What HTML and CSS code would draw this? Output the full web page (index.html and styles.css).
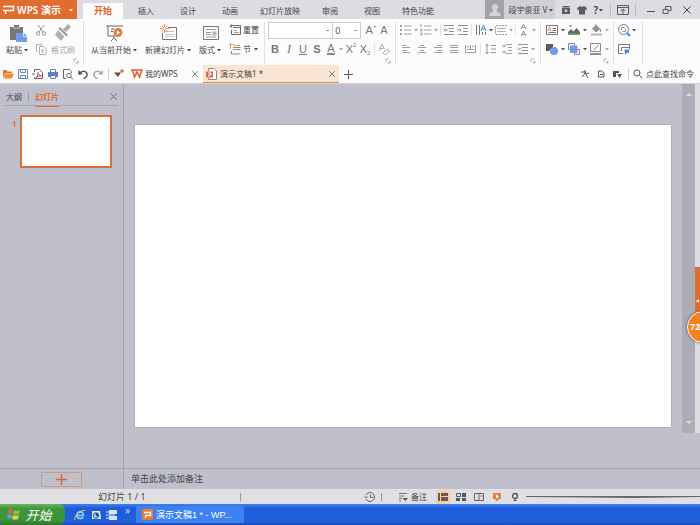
FILE: index.html
```html
<!DOCTYPE html>
<html lang="zh-CN">
<head>
  <meta charset="UTF-8" />
  <meta name="viewport" content="width=device-width, initial-scale=1" />
  <title>WPS 演示</title>
  <link rel="stylesheet" href="styles.css">
</head>
<body>

  <!-- Shared icons -->
  <svg class="icon-defs" aria-hidden="true">
    <symbol id="caret" viewBox="0 0 6 6"><path d="M1 2h4L3 4.500z" fill="currentColor"/></symbol>
    <symbol id="close" viewBox="0 0 10 10"><path d="M1.500 1.500l7 7M8.500 1.500l-7 7" stroke="currentColor" fill="none"/></symbol>
    <symbol id="corner" viewBox="0 0 6 6"><path d="M1 4V1h3M3 5h2V3z" stroke="currentColor" stroke-width=".7" fill="none"/></symbol>
    <symbol id="lines" viewBox="0 0 14 14"><path d="M2 2.500h10M2 5.500h10M2 8.500h10M2 11.500h10" stroke="currentColor" fill="none"/></symbol>
  </svg>

  <header class="titlebar">
    <button class="app-button">
      <svg width="12" height="10" viewBox="0 0 12 10"><path d="M0 1.500h10.500v4H2.500V9M0 5.500h4" fill="none" stroke="#fff" stroke-width="1.500"/></svg>
      <span>WPS 演示</span>
      <svg class="caret"><use href="#caret"/></svg>
    </button>
    <nav class="tabs">
      <a class="tab active" href="#">开始</a>
      <a class="tab" href="#">插入</a>
      <a class="tab" href="#">设计</a>
      <a class="tab" href="#">动画</a>
      <a class="tab long" href="#">幻灯片放映</a>
      <a class="tab" href="#">审阅</a>
      <a class="tab" href="#">视图</a>
      <a class="tab long" href="#">特色功能</a>
    </nav>
    <div class="account">
      <span class="avatar"><svg width="14" height="14" viewBox="0 0 14 14"><path d="M7 1a3 3 0 0 1 3 3c0 1.500-.8 2.500-1.200 3v1.500c1 .8 3.200 1 3.700 2.500v2h-11v-2c.5-1.500 2.700-1.700 3.700-2.500V7C4.800 6.500 4 5.500 4 4a3 3 0 0 1 3-3z" fill="#d4d4d6"/></svg></span>
      <button class="user">段宇俊亚 V <svg class="caret"><use href="#caret"/></svg></button>
    </div>
    <div class="window-tools">
      <button aria-label="云文档"><svg width="10" height="10" viewBox="0 0 10 10"><path d="M1.500 1h7v1.500h-7zM1 3h8v6H1z" fill="#5c5c5e"/><path d="M3.500 5.500L5 7l1.500-1.500M5 4v3" stroke="#eee" fill="none"/></svg></button>
      <button aria-label="皮肤"><svg width="10" height="10" viewBox="0 0 10 10"><path d="M3 1l2 1 2-1 3 2-1 2.500-1-.5v4.500H2V5l-1 .5L0 3z" fill="#5c5c5e"/></svg></button>
      <button class="help" aria-label="帮助">?<svg class="caret"><use href="#caret"/></svg></button>
      <span class="divider"></span>
      <button aria-label="功能区"><svg width="12" height="10" viewBox="0 0 12 10"><path d="M.500 .500h11v9H.500zM.500 2.500h11M6 9V4M3.800 6L6 4l2.200 2" fill="none" stroke="#5c5c5e"/></svg></button>
      <span class="divider"></span>
      <button class="minimize" aria-label="最小化"><svg width="10" height="10" viewBox="0 0 10 10"><path d="M1 6.500h8" stroke="#555" fill="none"/></svg></button>
      <button aria-label="还原"><svg width="10" height="10" viewBox="0 0 10 10"><path d="M1 4.500h5v4H1zM3.500 4V1.500H9v4H6.500" fill="none" stroke="#555"/></svg></button>
      <button class="close-window" aria-label="关闭"><svg width="10" height="10"><use href="#close"/></svg></button>
    </div>
  </header>

  <section class="ribbon">
    <div class="group clipboard">
      <button class="big">
        <svg width="20" height="20" viewBox="0 0 20 20"><path d="M2 4h4V2h5v2h4v13H2z" fill="#77777b"/><path d="M5 5h7" stroke="#c9c9cc" fill="none"/><path d="M8 10h8l3 3v6H8z" fill="#6f9de8"/><path d="M15.500 10v3.500H19" stroke="#fff" stroke-width=".7" fill="none"/></svg>
        <span>粘贴 <svg class="caret"><use href="#caret"/></svg></span>
      </button>
      <div class="stack">
        <button class="tool" aria-label="剪切"><svg viewBox="0 0 14 14"><path d="M4 2l5 7M10 2L5 9" stroke="#929296" fill="none"/><circle cx="4" cy="10.500" r="1.700" stroke="#929296" fill="none"/><circle cx="10" cy="10.500" r="1.700" stroke="#929296" fill="none"/></svg></button>
        <button class="tool" aria-label="复制"><svg viewBox="0 0 14 14"><path d="M4 9.500H2.500v-7h5V4M5.500 4.500H10L12 6.500v6H5.500zM7 8h3M7 10h3" stroke="#b0b0b3" fill="none"/></svg></button>
      </div>
      <button class="big muted">
        <svg width="20" height="20" viewBox="0 0 20 20"><path d="M15 1l3 3-5 5-3-2.500z" fill="#aaaaad"/><path d="M7 4l8 8-1.500 1.500-8-8z" fill="#99999c"/><path d="M5 7l6.500 6.500L8 18l-6-6z" fill="#b0b0b3"/></svg>
        <span>格式刷</span>
      </button>
      <svg class="corner"><use href="#corner"/></svg>
    </div>

    <div class="group slides">
      <button class="big">
        <svg width="20" height="20" viewBox="0 0 20 20"><path d="M1 3h17M3 3v10h7M9 13v3M6 18l3-3 3 3M6 6h3M6 8.500h2" stroke="#66666a" fill="none"/><circle cx="13" cy="9.500" r="4.500" fill="#e37d46"/><path d="M11.800 7.200l3.200 2.300-3.200 2.300z" fill="#fff"/></svg>
        <span>从当前开始 <svg class="caret"><use href="#caret"/></svg></span>
      </button>
      <button class="big">
        <svg width="20" height="20" viewBox="0 0 20 20"><path d="M9 4.500h8.500v12h-14V10" stroke="#77777b" fill="none"/><path d="M6 8.500h9M6 11.500h9M6 13.500h9" stroke="#c3c3c6" fill="none"/><path d="M5.500 1v9M1 5.500h9M2.500 2.500l6 6M8.500 2.500l-6 6" stroke="#ec8b4c" fill="none"/><circle cx="5.500" cy="5.500" r="1.200" fill="#fff"/></svg>
        <span>新建幻灯片 <svg class="caret"><use href="#caret"/></svg></span>
      </button>
      <button class="big">
        <svg width="20" height="20" viewBox="0 0 20 20"><path d="M2.500 3.500h15v13h-15z" stroke="#77777b" fill="none"/><path d="M5 6.500h10M5 9.500h5M5 11.500h5M5 14h10" stroke="#99999c" fill="none"/><path d="M11.500 8.500h4v4h-4z" fill="#b5b5b8"/></svg>
        <span>版式 <svg class="caret"><use href="#caret"/></svg></span>
      </button>
      <div class="stack">
        <button class="label-tool"><svg width="12" height="12" viewBox="0 0 12 12"><path d="M3 1.500h8.500v9h-9V6M4 3.500h7" stroke="#66666a" fill="none"/><path d="M5 6.500h3M5 8.500h5" stroke="#ec8b4c" fill="none"/><path d="M0 2l3-2v4z" fill="#4d82d8"/></svg>重置</button>
        <button class="label-tool"><svg width="12" height="12" viewBox="0 0 12 12"><path d="M4 4.500h7.500M4 6.500h7.500M2.500 8v3h9" stroke="#88888b" fill="none"/><path d="M0 1.500h5M1.500 0v6M5 2.500h6" stroke="#ec9d68" fill="none"/></svg>节 <svg class="caret"><use href="#caret"/></svg></button>
      </div>
    </div>

    <div class="group font">
      <div class="row">
        <select class="font-name" aria-label="字体"><option></option></select>
        <select class="font-size" aria-label="字号"><option>0</option></select>
        <button class="tool glyph" aria-label="增大字号">A<sup>+</sup></button>
        <button class="tool glyph" aria-label="减小字号">A<sup>-</sup></button>
      </div>
      <div class="row">
        <button class="tool glyph bold">B</button>
        <button class="tool glyph italic">I</button>
        <button class="tool glyph underline">U</button>
        <button class="tool glyph bold">S</button>
        <button class="tool glyph color-a"><span>A</span></button>
        <svg class="caret"><use href="#caret"/></svg>
        <button class="tool glyph">X<sup>2</sup></button>
        <button class="tool glyph">X<sub>2</sub></button>
        <span class="divider"></span>
        <button class="tool" aria-label="清除格式"><svg viewBox="0 0 14 14"><path d="M2 9l3-7 2.500 5.500M3 6.500h3.500" stroke="#aaaaad" fill="none"/><path d="M7 10l3.500-3 2 2L9 12.500H7.500L6 11z" stroke="#aaaaad" fill="none"/></svg></button>
      </div>
      <svg class="corner"><use href="#corner"/></svg>
    </div>

    <div class="group paragraph">
      <div class="row">
        <button class="tool drop" aria-label="项目符号"><svg viewBox="0 0 14 14"><path d="M5 3h7.500M5 7h7.500M5 11h7.500" stroke="#a0a0a3" fill="none"/><path d="M1 2h2v2H1zM1 6h2v2H1zM1 10h2v2H1z" fill="#a0a0a3"/></svg><svg class="caret"><use href="#caret"/></svg></button>
        <button class="tool drop" aria-label="编号"><svg viewBox="0 0 14 14"><path d="M5 3h7.500M5 7h7.500M5 11h7.500M2 1v3M1 6h2v2H1M1 10h2v2H1" stroke="#a0a0a3" fill="none"/></svg><svg class="caret"><use href="#caret"/></svg></button>
        <span class="divider"></span>
        <button class="tool" aria-label="减少缩进"><svg viewBox="0 0 14 14"><path d="M2 2.500h10M7 5.500h5M7 8.500h5M2 11.500h10M6 7H2M3.500 5.500L2 7l1.500 1.500" stroke="#929296" fill="none"/></svg></button>
        <button class="tool" aria-label="增加缩进"><svg viewBox="0 0 14 14"><path d="M2 2.500h10M7 5.500h5M7 8.500h5M2 11.500h10M1 7h4M3.500 5.500L5 7 3.500 8.500" stroke="#929296" fill="none"/></svg></button>
        <span class="divider"></span>
        <button class="tool drop dark" aria-label="文字方向"><svg viewBox="0 0 14 14"><path d="M2.500 2v10M5.500 2v10M8.500 9v3M11.500 9v3" stroke="#77777b" fill="none"/><path d="M7 8l2.500-6L12 8M8 6h3" stroke="#5585d2" fill="none"/></svg><svg class="caret"><use href="#caret"/></svg></button>
        <button class="tool drop" aria-label="对齐文本"><svg viewBox="0 0 14 14"><path d="M2 2.500h11M2 11.500h11" stroke="#a0a0a3" stroke-dasharray="2 1" fill="none"/><path d="M3 5.500h9M3 8.500h9M1.500 3v8" stroke="#b4b4b7" fill="none"/></svg><svg class="caret"><use href="#caret"/></svg></button>
        <span class="divider"></span>
        <button class="tool drop" aria-label="字符间距"><svg viewBox="0 0 14 14"><path d="M4 6l2.500-5L9 6M5 4.500h3M4 13l2.500-5L9 13M5 11.500h3" stroke="#929296" fill="none"/></svg><svg class="caret"><use href="#caret"/></svg></button>
      </div>
      <div class="row spaced">
        <button class="tool" aria-label="左对齐"><svg viewBox="0 0 14 14"><path d="M3 3.500h5M3 5.500h8M3 8.500h5M3 10.500h8" stroke="#a0a0a3" fill="none"/></svg></button>
        <button class="tool" aria-label="居中"><svg viewBox="0 0 14 14"><path d="M5 3.500h4M3 5.500h8M5 8.500h4M3 10.500h8" stroke="#a0a0a3" fill="none"/></svg></button>
        <button class="tool" aria-label="右对齐"><svg viewBox="0 0 14 14"><path d="M6 3.500h5M3 5.500h8M6 8.500h5M3 10.500h8" stroke="#a0a0a3" fill="none"/></svg></button>
        <button class="tool" aria-label="两端对齐"><svg viewBox="0 0 14 14"><path d="M3 3.500h8M3 5.500h8M3 8.500h8M3 10.500h8" stroke="#a0a0a3" fill="none"/></svg></button>
        <button class="tool" aria-label="分散对齐"><svg viewBox="0 0 14 14"><path d="M2.500 3v8M12.500 3v8M2 10.500h11M4 4.500h2M9 4.500h2M7.500 3v4M4 7.500h7" stroke="#a0a0a3" fill="none"/></svg></button>
        <span class="divider"></span>
        <button class="tool" aria-label="行距"><svg viewBox="0 0 14 14"><path d="M7 3.500h5M7 7h5M7 10.500h5M3 2v10M1.500 3.500L3 2l1.500 1.500M1.500 10.500L3 12l1.500-1.500" stroke="#929296" fill="none"/></svg></button>
        <button class="tool" aria-label="段前间距"><svg viewBox="0 0 14 14"><path d="M6 2.500h6M8 5.500h4M8 8.500h4M6 11.500h6M2 4h3M4 2.500L5.500 4 4 5.500M2 10h3M4 8.500L5.500 10 4 11.500" stroke="#a0a0a3" fill="none"/></svg></button>
        <button class="tool drop" aria-label="段落"><svg viewBox="0 0 14 14"><path d="M2 2.500h10M6 5.500h6M6 8.500h6M2 11.500h10M1.500 7h4" stroke="#929296" fill="none"/></svg><svg class="caret"><use href="#caret"/></svg></button>
      </div>
      <svg class="corner"><use href="#corner"/></svg>
    </div>

    <div class="group drawing">
      <div class="row">
        <button class="tool drop dark" aria-label="文本框"><svg viewBox="0 0 14 14"><path d="M1.500 2.500h11v9h-11zM7.500 5.500H11M7.500 7.500H11M3.500 9.500H11" stroke="#77777b" fill="none"/><path d="M3 8l1.500-4L6 8" stroke="#e37d46" fill="none"/></svg><svg class="caret"><use href="#caret"/></svg></button>
        <button class="tool drop dark" aria-label="图片"><svg viewBox="0 0 14 14"><path d="M1 12V9l3-3 2.500 2.500L9.500 5 13 9v3z" fill="#66666a"/><path d="M1 10.500h12V12H1z" fill="#6ba865"/><circle cx="3.500" cy="3" r="1.300" fill="#ec8b4c"/></svg><svg class="caret"><use href="#caret"/></svg></button>
        <button class="tool drop" aria-label="填充"><svg viewBox="0 0 14 14"><path d="M3 5.500L7 2l4.500 4L7 9.500z" fill="#929296"/><path d="M7 1v3M11.500 6v3" stroke="#929296" fill="none"/><path d="M2 10.500h11v2H2z" fill="#b5b5b8"/></svg><svg class="caret"><use href="#caret"/></svg></button>
      </div>
      <div class="row">
        <button class="tool drop dark" aria-label="形状"><svg viewBox="0 0 14 14"><path d="M1 2h7v3L4 9H1z" fill="#5c5c60"/><circle cx="9" cy="9" r="4" fill="#6f9de8"/></svg><svg class="caret"><use href="#caret"/></svg></button>
        <button class="tool drop dark" aria-label="排列"><svg viewBox="0 0 14 14"><path d="M1.500 1.500h6v6h-6zM7.500 7.500h5v5h-5z" stroke="#88888b" fill="none"/><path d="M3 3.500h7.500v7.500H3z" fill="#6f9de8"/></svg><svg class="caret"><use href="#caret"/></svg></button>
        <button class="tool drop" aria-label="轮廓"><svg viewBox="0 0 14 14"><path d="M1.500 1.500h10v8h-10zM4.500 8L10 3" stroke="#88888b" fill="none"/><path d="M1 11h11v2H1z" fill="#929296"/></svg><svg class="caret"><use href="#caret"/></svg></button>
      </div>
      <svg class="corner"><use href="#corner"/></svg>
    </div>

    <div class="group find">
      <div class="row">
        <button class="tool drop dark" aria-label="查找"><svg viewBox="0 0 14 14"><circle cx="6.500" cy="6.500" r="5" stroke="#4d82d8" fill="none"/><path d="M10 10l3 3" stroke="#4d82d8" stroke-width="2"/><path d="M4.500 7V4.500H8M8.500 6v2.500H5.500" stroke="#e37d46" fill="none"/></svg><svg class="caret"><use href="#caret"/></svg></button>
      </div>
      <div class="row">
        <button class="tool" aria-label="选择"><svg viewBox="0 0 14 14"><path d="M6 11.500H1.500v-9h11V7M4.500 9V5.500H12" stroke="#77777b" fill="none"/><path d="M7.500 7.500h5l-1 4-1.500-1-2 2.500z" fill="#4d82d8"/></svg></button>
      </div>
    </div>
  </section>

  <section class="docbar">
    <div class="quick">
      <button aria-label="打开"><svg width="12" height="12" viewBox="0 0 12 12"><path d="M1 10V2h3.500l1 1.500H10V5H3.500z" fill="#e7762c"/><path d="M3.500 5.500H12L10 10.500H1.500z" fill="#f08b3c"/></svg></button>
      <button aria-label="保存"><svg width="12" height="12" viewBox="0 0 12 12"><path d="M1.500 1.500h9v9h-9zM3.500 1.500v3h5v-3M3.500 10.500v-3h5v3" stroke="#6289c9" fill="none"/></svg></button>
      <button aria-label="输出为PDF"><svg width="12" height="12" viewBox="0 0 12 12"><path d="M2.500 4V1.500h5l3 3v6h-8V9" stroke="#66666a" fill="none"/><path d="M4 9.500c2-2 2.500-4 2-5 0 2 1.500 3.500 3.500 3.500C7 7.500 5 8.500 4 9.500z" stroke="#cf4b3d" fill="none"/><path d="M0 6h3" stroke="#66666a"/></svg></button>
      <button aria-label="打印"><svg width="12" height="12" viewBox="0 0 12 12"><path d="M1 4h10v5H1z" fill="#5f82c4"/><path d="M3.500 4V1.500h5V4M3.500 7.500h5v3h-5z" stroke="#5f82c4" fill="#fff"/></svg></button>
      <button aria-label="打印预览"><svg width="12" height="12" viewBox="0 0 12 12"><path d="M4 10.500H1.500v-9h6l2 2V5" stroke="#66666a" fill="none"/><circle cx="7" cy="7.500" r="2.200" stroke="#66666a" fill="none"/><path d="M8.500 9l2.500 2.500" stroke="#66666a"/></svg></button>
      <button aria-label="撤销"><svg width="12" height="12" viewBox="0 0 12 12"><path d="M2.500 5.500c3-4 7.500-2 7.500 1 0 2-1.500 3.500-3.500 4" stroke="#555" stroke-width="1.500" fill="none"/><path d="M1 2l.5 5 4.500-1z" fill="#555"/></svg></button>
      <button aria-label="恢复"><svg width="12" height="12" viewBox="0 0 12 12"><path d="M9.500 5.500c-3-4-7.500-2-7.500 1 0 2 1.500 3.500 3.500 4" stroke="#aaa" stroke-width="1.500" fill="none"/><path d="M11 2l-.5 5L6 6z" fill="#aaa"/></svg></button>
      <span class="divider"></span>
      <button aria-label="自定义"><svg width="12" height="12" viewBox="0 0 12 12"><path d="M1 4.500h7L5 9z" fill="#555"/><circle cx="9" cy="3" r="1.800" fill="#e5703a"/></svg></button>
    </div>
    <div class="doc-tab">
      <svg width="12" height="10" viewBox="0 0 12 10"><path d="M0 1h8.500M1.500 1l2 7L6 3l2.500 5L11 1H8" stroke="#df5c2c" stroke-width="1.500" fill="none"/></svg>
      <span>我的WPS</span>
      <button aria-label="关闭标签"><svg width="8" height="8"><use href="#close"/></svg></button>
    </div>
    <div class="doc-tab current">
      <svg width="12" height="12" viewBox="0 0 12 12"><path d="M2.500 3V.500H8L10.500 3v8.500h-8V10" stroke="#88888b" fill="#fff"/><path d="M0 3.500h7v6H0z" fill="#df6a35"/><path d="M2 5h3v2H2.500v1.500" stroke="#fff" fill="none"/></svg>
      <span>演示文稿1 *</span>
      <button aria-label="关闭标签"><svg width="8" height="8"><use href="#close"/></svg></button>
    </div>
    <button class="new-tab" aria-label="新建"><svg width="9" height="9" viewBox="0 0 9 9"><path d="M4.500 0v9M0 4.500h9" stroke="#555" fill="none"/></svg></button>
    <div class="doc-tools">
      <button aria-label="协作"><svg width="10" height="10" viewBox="0 0 10 10"><path d="M1 3h5L2 8M5 1v3l3 5M6 5l3-1" stroke="#555" fill="none"/></svg></button>
      <button aria-label="文档"><svg width="10" height="10" viewBox="0 0 10 10"><path d="M2.500 2h3l2.500 2v4H2.500zM4 5.500h3" stroke="#555" fill="none"/></svg></button>
      <button aria-label="分享"><svg width="10" height="10" viewBox="0 0 10 10"><path d="M1 2h6v2H4v4H1z" fill="#555"/><path d="M5 5h5L7.500 9z" fill="#555"/></svg></button>
      <span class="divider"></span>
      <button class="search"><svg width="10" height="10" viewBox="0 0 10 10"><circle cx="4" cy="4" r="3" stroke="#555" fill="none"/><path d="M6.500 6.500L9 9" stroke="#555"/></svg>点此查找命令</button>
    </div>
  </section>

  <main class="workspace">
    <aside class="outline">
      <div class="outline-head">
        <a href="#">大纲</a>
        <span class="divider"></span>
        <a class="active" href="#">幻灯片</a>
        <button aria-label="关闭窗格"><svg width="9" height="9"><use href="#close"/></svg></button>
      </div>
      <div class="thumbs">
        <span class="number">1</span>
        <div class="thumb"></div>
      </div>
      <div class="outline-foot">
        <button class="add-slide" aria-label="新建幻灯片"><svg width="11" height="11" viewBox="0 0 11 11"><path d="M5.500 0v11M0 5.500h11" stroke="#d8622c" stroke-width="1.500" fill="none"/></svg></button>
      </div>
    </aside>
    <section class="editor">
      <div class="canvas">
        <div class="slide"></div>
        <div class="scrollbar">
          <svg width="6" height="4" viewBox="0 0 6 4"><path d="M0 4l3-3 3 3z" fill="#dcdce0"/></svg>
          <svg width="6" height="4" viewBox="0 0 6 4"><path d="M0 0l3 3 3-3z" fill="#dcdce0"/></svg>
        </div>
        <div class="task-edge"></div>
      </div>
      <div class="notes">单击此处添加备注</div>
    </section>
    <div class="side-flag"><svg width="3" height="4" viewBox="0 0 3 4"><path d="M3 0v4L0 2z" fill="#fff"/></svg></div>
    <div class="score-ball">72</div>
  </main>

  <footer class="statusbar">
    <span class="page">幻灯片 1 / 1</span>
    <span class="divider"></span>
    <div class="views">
      <button aria-label="历史"><svg width="12" height="12" viewBox="0 0 12 12"><path d="M2 4a4.500 4.500 0 1 1 0 4M.500 5.500L2 7l1.500-1.500M6.500 3.500v3H9" stroke="#66666a" fill="none"/></svg></button>
      <span class="divider"></span>
      <button class="notes-toggle"><svg width="10" height="10" viewBox="0 0 10 10"><path d="M1 1.500h8M1 4h5M1 6.500h3M1 9h2" stroke="#77777b" fill="none"/><path d="M4.500 6H10L7.500 9z" fill="#555"/></svg>备注</button>
      <button class="view on" aria-label="普通视图"><svg width="10" height="10" viewBox="0 0 10 10"><path d="M0 1h2v8H0zM3 1h7v3H3zM3 5h7v4H3z" fill="#6b5a52"/></svg></button>
      <button class="view" aria-label="浏览视图"><svg width="10" height="10" viewBox="0 0 10 10"><path d="M.500 1.500h4v3h-4z" stroke="#555" fill="none"/><path d="M6 1h4v4H6zM0 6h4v3H0zM6 6h4v3H6z" fill="#555"/></svg></button>
      <button class="view" aria-label="阅读视图"><svg width="10" height="10" viewBox="0 0 10 10"><path d="M.500 1.500h9v7h-9zM5 1.500v7M6.500 4h2" stroke="#66666a" fill="none"/></svg></button>
      <button class="view" aria-label="放映"><svg width="10" height="10" viewBox="0 0 10 10"><path d="M1 1h8v6H7L5 9.500 3 7H1z" fill="#e38146"/><path d="M4 2.500L7 4.500 4 6.500z" fill="#fff"/></svg></button>
      <button class="view" aria-label="缩放"><svg width="10" height="10" viewBox="0 0 10 10"><circle cx="5" cy="4" r="2.500" stroke="#555" stroke-width="1.300" fill="none"/><path d="M5 6v3M3.500 8.500h3" stroke="#555"/></svg></button>
      <svg class="zoom-line" viewBox="0 0 174 4" preserveAspectRatio="none"><path d="M0 1h174v1L110 3 60 2.500 0 2z" fill="#666"/></svg>
    </div>
  </footer>

  <div class="taskbar">
    <button class="start">
      <svg width="14" height="13" viewBox="0 0 14 13"><path d="M1 2c2-1 3.500-1 5 0L5 6C3.500 5 2 5 .500 6z" fill="#e9633a"/><path d="M7 2c2 1 3.500 1 6 0l-1 4c-2 1-4 1-6 0z" fill="#83c44a"/><path d="M.500 7c1.500-1 3-1 4.500 0l-1 4c-1.500-1-3-1-4 0z" fill="#5c9bea"/><path d="M6 7c2 1 4 1 6 0l-1 4c-2 1-4 1-6 0z" fill="#f6c83d"/></svg>
      开始
    </button>
    <div class="launch">
      <button aria-label="浏览器"><svg width="12" height="12" viewBox="0 0 12 12"><path d="M3 6.500h6.500C9.500 1.500 3 2 3 6.500c0 3.500 4.500 4 6 1.500" stroke="#8fd0f7" stroke-width="1.700" fill="none"/><path d="M1 11C-1 8 7 0 11 1.500" stroke="#f2c84b" fill="none"/></svg></button>
      <button aria-label="媒体"><svg width="12" height="12" viewBox="0 0 12 12"><path d="M2 2h8l1 8H2z" fill="#dcecfb"/><circle cx="6" cy="6.500" r="2.500" stroke="#347cc9" stroke-width="1.300" fill="none"/><path d="M6 4v3h3" stroke="#347cc9"/></svg></button>
      <button aria-label="显示桌面"><svg width="12" height="12" viewBox="0 0 12 12"><path d="M3 1h8v4H3zM3 7h8v4H3z" fill="#d8e8fb"/><path d="M0 3h3M0 6h9M0 9h3" stroke="#d8e8fb"/></svg></button>
      <span class="more">»</span>
    </div>
    <button class="task">
      <svg width="11" height="11" viewBox="0 0 11 11"><rect width="11" height="11" rx="2" fill="#ef7a2d"/><path d="M2 3.500h6.500v3H3.500V9" stroke="#fff" stroke-width="1.300" fill="none"/></svg>
      演示文稿1 * - WP...
    </button>
  </div>

</body>
</html>
```
FILE: styles.css
```css
* {
  box-sizing: border-box;
}

body {
  margin: 0;
  height: 100vh;
  display: flex;
  flex-direction: column;
  overflow: hidden;
  font-family: "Noto Sans", "Noto Sans CJK SC", sans-serif;
  font-size: 8px;
  line-height: 12px;
  color: #444;
  background: #c0c0cc;
}

button {
  display: flex;
  align-items: center;
  justify-content: center;
  padding: 0;
  border: none;
  background: none;
  font: inherit;
  color: inherit;
  white-space: nowrap;
}

a {
  color: inherit;
  text-decoration: none;
}

svg {
  flex: none;
}

.icon-defs {
  position: absolute;
  width: 0;
  height: 0;
}

.caret {
  width: 6px;
  height: 6px;
}

.divider {
  flex: none;
  width: 1px;
  height: 12px;
  background: #cfcfd2;
}

/* Title bar */
.titlebar {
  flex: none;
  display: flex;
  height: 19px;
  background: #dddde1;
}

.app-button {
  width: 77px;
  gap: 2px;
  font-size: 10px;
  font-weight: 600;
  color: #fff;
  background: #e06c2d;
}

.app-button .caret {
  margin-left: 5px;
}

.tabs {
  display: flex;
  align-items: flex-end;
  margin-left: 6px;
}

.tab {
  padding: 1px 13px;
  height: 16px;
  line-height: 14px;
}

.tab.long {
  padding: 1px 9px;
}

.tab.active {
  margin-right: 2px;
  padding: 1px 11px;
  font-size: 9px;
  font-weight: bold;
  color: #de6427;
  background: #fcfcfd;
}

.account {
  display: flex;
  margin-left: auto;
  background: #cfcfd4;
}

.avatar {
  display: flex;
  align-items: center;
  justify-content: center;
  width: 19px;
  background: #a3a3a7;
}

.user {
  padding: 0 1px 0 4px;
  gap: 1px;
}

.window-tools {
  display: flex;
  align-items: center;
  gap: 6px;
  padding: 0 8px 0 6px;
}

.window-tools .divider {
  background: #bbbbc0;
}

.help {
  font-size: 10px;
  font-weight: 600;
}

.minimize,
.close-window {
  margin-left: 4px;
}

/* Ribbon */
.ribbon {
  flex: none;
  display: flex;
  height: 46px;
  padding: 2px 0 1px;
  background: #fcfcfd;
}

.group {
  position: relative;
  padding: 0 3px;
  border-right: 1px solid #e1e1e4;
}

.corner {
  position: absolute;
  right: 4px;
  bottom: 0;
  width: 6px;
  height: 6px;
  color: #99999c;
}

.clipboard,
.slides {
  display: flex;
}

.clipboard {
  width: 84px;
  padding-left: 6px;
}

.slides {
  padding: 0 5px 0 7px;
  gap: 7px;
}

.big {
  flex-direction: column;
  justify-content: flex-start;
  height: 36px;
  padding-top: 2px;
  gap: 1px;
}

.big span {
  display: flex;
  align-items: center;
  gap: 1px;
}

.muted {
  color: #a5a5a8;
}

.stack {
  display: flex;
  flex-direction: column;
  gap: 5px;
  padding: 2px 3px 0 5px;
}

.slides .stack {
  padding: 2px 0 0;
}

.label-tool {
  gap: 2px;
  height: 14px;
  justify-content: flex-start;
}

.row {
  display: flex;
  align-items: center;
  height: 18px;
}

.row + .row {
  margin-top: 1px;
}

.spaced {
  gap: 2px;
}

.tool {
  flex: none;
  width: 14px;
  height: 14px;
}

.tool svg:first-child {
  width: 14px;
  height: 14px;
}

.tool.drop {
  width: 20px;
}

.drop .caret,
.font .caret {
  color: #a5a5a8;
}

.drop.dark .caret {
  color: #555;
}

.row .divider {
  margin: 0 1px;
  background: #e1e1e4;
}

.font {
  width: 131px;
}

.font .divider {
  margin: 0 2px;
}

.font-name,
.font-size {
  appearance: none;
  height: 17px;
  padding: 0 2px;
  border: 1px solid #cacacd;
  border-radius: 0;
  font-family: inherit;
  font-size: 9px;
  color: #555;
  background: #fff linear-gradient(#999, #999) no-repeat right 3px center / 3px 1px;
}

.font-name {
  width: 66px;
}

.font-size {
  width: 28px;
  border-left: none;
  margin-right: 3px;
}

.glyph {
  font-family: "Liberation Sans", sans-serif;
  font-size: 11px;
  color: #77777a;
}

.glyph sup,
.glyph sub {
  font-size: 6px;
  line-height: 6px;
}

.glyph sup {
  align-self: flex-start;
}

.glyph sub {
  align-self: flex-end;
}

.bold {
  font-weight: bold;
}

.italic {
  font-family: "Liberation Serif", serif;
  font-size: 12px;
  font-style: italic;
}

.underline {
  text-decoration: underline;
}

.color-a span {
  line-height: 10px;
  border-bottom: 2px solid #88888b;
}

.paragraph {
  width: 145px;
}

.paragraph .dark {
  width: 21px;
}

.drawing {
  width: 73px;
}

.drawing .drop {
  width: 22px;
  gap: 1px;
}

.find {
  width: 29px;
}

/* Quick access and document tabs */
.docbar {
  flex: none;
  display: flex;
  align-items: stretch;
  height: 19px;
  background: #fbfbfc;
  border-bottom: 1px solid #d2d2d8;
}

.quick {
  display: flex;
  align-items: center;
  gap: 3px;
  padding: 0 6px 0 2px;
}

.quick .divider {
  margin: 0 1px;
}

.doc-tab {
  display: flex;
  align-items: center;
  gap: 2px;
  width: 68px;
}

.doc-tab button {
  margin-left: auto;
  color: #666;
}

.doc-tab.current {
  width: 136px;
  margin-left: 4px;
  padding: 0 3px;
  background: #fae5d5;
  border-bottom: 1px solid #e08a55;
}

.new-tab {
  width: 18px;
}

.doc-tools {
  display: flex;
  align-items: center;
  gap: 6px;
  margin-left: auto;
  padding-right: 6px;
}

.doc-tools .divider {
  margin-right: -2px;
}

.search {
  gap: 3px;
}

/* Workspace */
.workspace {
  position: relative;
  flex: 1;
  min-height: 0;
  display: flex;
}

.outline {
  flex: none;
  display: flex;
  flex-direction: column;
  width: 124px;
  border-right: 1px solid #a5a5b0;
}

.outline-head {
  display: flex;
  align-items: center;
  gap: 6px;
  height: 22px;
  margin: 0 5px 0 4px;
  padding: 4px 0 0 2px;
  border-bottom: 1px solid #a5a5b0;
}

.outline-head .divider {
  height: 8px;
  background: #99999f;
}

.outline-head .active {
  padding-bottom: 3px;
  margin-bottom: -4px;
  font-weight: bold;
  color: #e06c2d;
  border-bottom: 1px solid #e06c2d;
}

.outline-head button {
  margin-left: auto;
  color: #666;
}

.thumbs {
  flex: 1;
  display: flex;
  align-items: flex-start;
  gap: 3px;
  padding: 9px 11px 0 12px;
}

.number {
  width: 5px;
  padding-top: 3px;
  font-weight: bold;
  color: #e06c2d;
}

.thumb {
  flex: 1;
  aspect-ratio: 92 / 53;
  background: #fff;
  border: 2px solid #d8703a;
}

.outline-foot {
  display: flex;
  align-items: center;
  justify-content: center;
  height: 21px;
  border-top: 1px solid #a5a5b0;
}

.add-slide {
  width: 41px;
  height: 15px;
  border: 1px solid #d59a7c;
}

.editor {
  flex: 1;
  display: flex;
  flex-direction: column;
}

.canvas {
  flex: 1;
  display: flex;
  padding-bottom: 35px;
}

.slide {
  flex: 1;
  margin: 41px 11px 6px;
  background: #fff;
  box-shadow: 0 0 2px #8c8c96;
}

.scrollbar {
  display: flex;
  flex-direction: column;
  align-items: center;
  justify-content: space-between;
  width: 13px;
  padding: 8px 0;
  background: #acacb6;
}

.task-edge {
  width: 5px;
  background: #dddde1;
}

.notes {
  height: 21px;
  padding: 0 7px;
  font-size: 9px;
  line-height: 20px;
  border-top: 1px solid #a5a5b0;
}

.side-flag {
  position: absolute;
  top: 183px;
  right: 0;
  display: flex;
  align-items: center;
  width: 5px;
  height: 60px;
  padding: 8px 1px 0;
  background: #e06c2d;
}

.score-ball {
  position: absolute;
  top: 227px;
  right: -19px;
  width: 32px;
  height: 32px;
  padding-left: 2px;
  border: 1px solid #fff;
  border-radius: 50%;
  font-size: 9px;
  font-weight: bold;
  line-height: 30px;
  color: #fff;
  background: #f5821f;
  box-shadow: 0 0 3px #555;
}

/* Status bar */
.statusbar {
  flex: none;
  display: flex;
  align-items: center;
  height: 15px;
  padding-left: 98px;
  background: #e0dfe3;
}

.page {
  width: 142px;
  font-size: 9px;
}

.statusbar .divider {
  height: 8px;
  background: #99999f;
}

.views {
  display: flex;
  align-items: center;
  margin-left: auto;
}

.views .divider {
  margin: 0 16px 0 5px;
}

.notes-toggle {
  gap: 3px;
  margin-right: 9px;
}

.view {
  width: 14px;
  height: 14px;
  margin-right: 4px;
}

.view.on {
  background: #f7cdb0;
}

.zoom-line {
  width: 174px;
  height: 4px;
}

/* Taskbar */
.taskbar {
  flex: none;
  display: flex;
  height: 21px;
  background: linear-gradient(#3f83ea, #1f5bdb 20%, #2160dd 85%, #1746b4);
}

.start {
  gap: 4px;
  width: 65px;
  padding-right: 6px;
  font-size: 13px;
  font-style: italic;
  color: #fff;
  border-radius: 0 6px 6px 0;
  background: linear-gradient(#69b55f, #3a9439 25%, #3a9439 80%, #2a742b);
}

.launch {
  display: flex;
  align-items: center;
  gap: 4px;
  width: 71px;
  padding-left: 9px;
}

.more {
  align-self: flex-start;
  margin-left: 3px;
  font-size: 10px;
  color: #c4dafb;
}

.task {
  gap: 3px;
  justify-content: flex-start;
  width: 108px;
  margin: 2px 0;
  padding-left: 6px;
  border-radius: 2px;
  font-family: "Liberation Sans", "Noto Sans CJK SC", sans-serif;
  font-size: 9px;
  color: #fff;
  background: #3d82f0;
}
```
